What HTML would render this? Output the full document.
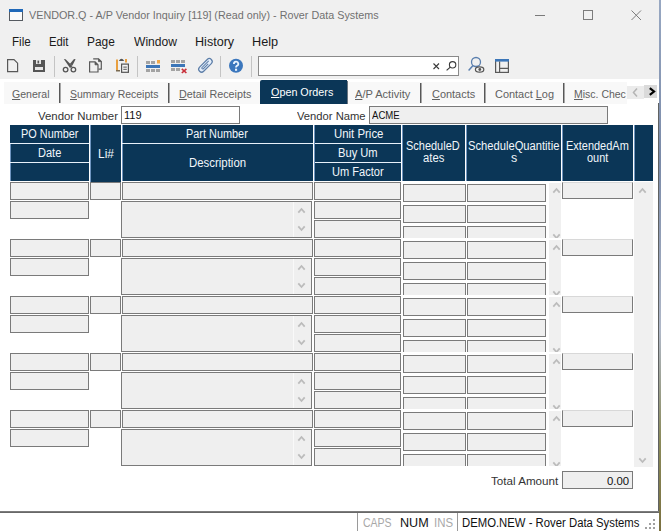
<!DOCTYPE html>
<html><head><meta charset="utf-8"><style>
html,body{margin:0;padding:0;}
body{width:661px;height:531px;position:relative;overflow:hidden;background:#fff;font-family:"Liberation Sans", sans-serif;}
.b{position:absolute;}
.t{position:absolute;white-space:pre;line-height:1;font-family:"Liberation Sans", sans-serif;transform-origin:0 0;}
.t u{text-decoration:underline;text-underline-offset:0.5px;text-decoration-thickness:1px;}
</style></head><body>
<div class="b" style="left:0px;top:0px;width:659px;height:79px;background:#f0f0f0;"></div><div class="b" style="left:4px;top:82px;width:623px;height:22px;background:#f8f8f8;"></div><div class="b" style="left:260px;top:80px;width:87px;height:24px;background:#0b3657;border-top-left-radius:2px;"></div><div class="b" style="left:347px;top:81px;width:1px;height:23px;background:#6a7580;"></div><div class="b" style="left:59px;top:83px;width:1px;height:20px;background:#585858;"></div><div class="b" style="left:60px;top:83px;width:1px;height:20px;background:#a8a8a8;"></div><div class="b" style="left:168px;top:83px;width:1px;height:20px;background:#585858;"></div><div class="b" style="left:169px;top:83px;width:1px;height:20px;background:#a8a8a8;"></div><div class="b" style="left:420px;top:83px;width:1px;height:20px;background:#585858;"></div><div class="b" style="left:421px;top:83px;width:1px;height:20px;background:#a8a8a8;"></div><div class="b" style="left:484px;top:83px;width:1px;height:20px;background:#585858;"></div><div class="b" style="left:485px;top:83px;width:1px;height:20px;background:#a8a8a8;"></div><div class="b" style="left:563px;top:83px;width:1px;height:20px;background:#585858;"></div><div class="b" style="left:564px;top:83px;width:1px;height:20px;background:#a8a8a8;"></div><div class="b" style="left:658px;top:103px;width:1px;height:409px;background:#606262;"></div><div class="b" style="left:659px;top:0px;width:2px;height:532px;background:linear-gradient(#98a8c2 0%,#7a8aa8 30%,#b0b8c8 62%,#8a8a5a 83%,#7a7040 100%);"></div><div class="b" style="left:0px;top:511px;width:659px;height:1px;background:#7c7c7c;"></div><div class="b" style="left:0px;top:512px;width:659px;height:1px;background:#686868;"></div><div class="b" style="left:0px;top:513px;width:659px;height:19px;background:#ffffff;"></div><div class="b" style="left:357px;top:513px;width:1px;height:19px;background:#9a9a9a;"></div><div class="b" style="left:457px;top:513px;width:1px;height:19px;background:#9a9a9a;"></div><div class="b" style="left:258px;top:56px;width:201px;height:20px;background:#fff;border:1px solid #8a8a8a;box-sizing:border-box;"></div><div class="b" style="left:54px;top:56px;width:1px;height:21px;background:#c4c4c4;"></div><div class="b" style="left:137px;top:56px;width:1px;height:21px;background:#c4c4c4;"></div><div class="b" style="left:220px;top:56px;width:1px;height:21px;background:#c4c4c4;"></div><div class="b" style="left:251px;top:56px;width:1px;height:21px;background:#c4c4c4;"></div><div class="b" style="left:121px;top:106px;width:119px;height:18px;background:#fff;border:1px solid #7a7a7a;box-sizing:border-box;"></div><div class="b" style="left:369px;top:106px;width:239px;height:18px;background:#efefef;border:1px solid #7a7a7a;box-sizing:border-box;"></div><div class="b" style="left:10px;top:125px;width:79px;height:56px;background:#0b3657;"></div><div class="b" style="left:10px;top:144px;width:1px;height:37px;background:#6f95c0;"></div><div class="b" style="left:10px;top:143px;width:79px;height:1px;background:#e8f1fa;"></div><div class="b" style="left:10px;top:162px;width:79px;height:1px;background:#e8f1fa;"></div><div class="b" style="left:90px;top:125px;width:31px;height:57px;background:#0b3657;"></div><div class="b" style="left:90px;top:125px;width:1px;height:57px;background:#6f95c0;"></div><div class="b" style="left:122px;top:125px;width:191px;height:56px;background:#0b3657;"></div><div class="b" style="left:122px;top:125px;width:1px;height:56px;background:#6f95c0;"></div><div class="b" style="left:122px;top:143px;width:191px;height:1px;background:#e8f1fa;"></div><div class="b" style="left:314px;top:125px;width:87px;height:56px;background:#0b3657;"></div><div class="b" style="left:314px;top:125px;width:1px;height:56px;background:#6f95c0;"></div><div class="b" style="left:315px;top:143px;width:86px;height:1px;background:#e8f1fa;"></div><div class="b" style="left:315px;top:162px;width:86px;height:1px;background:#e8f1fa;"></div><div class="b" style="left:402px;top:125px;width:63px;height:56px;background:#0b3657;"></div><div class="b" style="left:402px;top:125px;width:1px;height:56px;background:#6f95c0;"></div><div class="b" style="left:466px;top:125px;width:95px;height:56px;background:#0b3657;"></div><div class="b" style="left:466px;top:125px;width:1px;height:56px;background:#6f95c0;"></div><div class="b" style="left:562px;top:125px;width:71px;height:56px;background:#0b3657;"></div><div class="b" style="left:562px;top:125px;width:1px;height:56px;background:#6f95c0;"></div><div class="b" style="left:634px;top:125px;width:19px;height:56px;background:#0b3657;"></div><div class="b" style="left:634px;top:125px;width:1px;height:56px;background:#6f95c0;"></div><div class="b" style="left:634px;top:182px;width:19px;height:285px;background:#f0f0f0;"></div><div class="b" style="left:10px;top:182px;width:79px;height:18px;background:#efefef;border:1px solid #7a7a7a;box-sizing:border-box;"></div><div class="b" style="left:10px;top:201px;width:79px;height:18px;background:#efefef;border:1px solid #7a7a7a;box-sizing:border-box;"></div><div class="b" style="left:90px;top:182px;width:31px;height:18px;background:#efefef;border:1px solid #7a7a7a;box-sizing:border-box;"></div><div class="b" style="left:122px;top:182px;width:191px;height:18px;background:#efefef;border:1px solid #7a7a7a;box-sizing:border-box;"></div><div class="b" style="left:121px;top:201px;width:191px;height:37px;background:#efefef;border:1px solid #7a7a7a;box-sizing:border-box;"></div><div class="b" style="left:293px;top:202px;width:1px;height:35px;background:#f9f9f9;"></div><div class="b" style="left:314px;top:182px;width:87px;height:18px;background:#efefef;border:1px solid #7a7a7a;box-sizing:border-box;"></div><div class="b" style="left:314px;top:201px;width:87px;height:18px;background:#efefef;border:1px solid #7a7a7a;box-sizing:border-box;"></div><div class="b" style="left:314px;top:220px;width:87px;height:18px;background:#efefef;border:1px solid #7a7a7a;box-sizing:border-box;"></div><div class="b" style="left:402px;top:182px;width:160px;height:56px;overflow:hidden;"><div class="b" style="left:1px;top:2px;width:63px;height:18px;background:#efefef;border:1px solid #7a7a7a;box-sizing:border-box;"></div><div class="b" style="left:65px;top:2px;width:79px;height:18px;background:#efefef;border:1px solid #7a7a7a;box-sizing:border-box;"></div><div class="b" style="left:1px;top:23px;width:63px;height:18px;background:#efefef;border:1px solid #7a7a7a;box-sizing:border-box;"></div><div class="b" style="left:65px;top:23px;width:79px;height:18px;background:#efefef;border:1px solid #7a7a7a;box-sizing:border-box;"></div><div class="b" style="left:1px;top:44px;width:63px;height:18px;background:#efefef;border:1px solid #7a7a7a;box-sizing:border-box;"></div><div class="b" style="left:65px;top:44px;width:79px;height:18px;background:#efefef;border:1px solid #7a7a7a;box-sizing:border-box;"></div><div class="b" style="left:147px;top:1px;width:12px;height:55px;background:#f0f0f0;"></div><svg class="b" style="left:150px;top:5px" width="9" height="7"><path d="M1.3 5.6 L4.5 2 L7.7 5.6" fill="none" stroke="#bcbcbc" stroke-width="1.8"/></svg><svg class="b" style="left:150px;top:51px" width="9" height="7"><path d="M1.3 1.4 L4.5 5 L7.7 1.4" fill="none" stroke="#bcbcbc" stroke-width="1.8"/></svg></div><div class="b" style="left:562px;top:182px;width:71px;height:17px;background:#efefef;border:1px solid #7a7a7a;border-top-color:#d8d8d8;box-sizing:border-box;"></div><div class="b" style="left:10px;top:239px;width:79px;height:18px;background:#efefef;border:1px solid #7a7a7a;box-sizing:border-box;"></div><div class="b" style="left:10px;top:258px;width:79px;height:18px;background:#efefef;border:1px solid #7a7a7a;box-sizing:border-box;"></div><div class="b" style="left:90px;top:239px;width:31px;height:18px;background:#efefef;border:1px solid #7a7a7a;box-sizing:border-box;"></div><div class="b" style="left:122px;top:239px;width:191px;height:18px;background:#efefef;border:1px solid #7a7a7a;box-sizing:border-box;"></div><div class="b" style="left:121px;top:258px;width:191px;height:37px;background:#efefef;border:1px solid #7a7a7a;box-sizing:border-box;"></div><div class="b" style="left:293px;top:259px;width:1px;height:35px;background:#f9f9f9;"></div><div class="b" style="left:314px;top:239px;width:87px;height:18px;background:#efefef;border:1px solid #7a7a7a;box-sizing:border-box;"></div><div class="b" style="left:314px;top:258px;width:87px;height:18px;background:#efefef;border:1px solid #7a7a7a;box-sizing:border-box;"></div><div class="b" style="left:314px;top:277px;width:87px;height:18px;background:#efefef;border:1px solid #7a7a7a;box-sizing:border-box;"></div><div class="b" style="left:402px;top:239px;width:160px;height:56px;overflow:hidden;"><div class="b" style="left:1px;top:2px;width:63px;height:18px;background:#efefef;border:1px solid #7a7a7a;box-sizing:border-box;"></div><div class="b" style="left:65px;top:2px;width:79px;height:18px;background:#efefef;border:1px solid #7a7a7a;box-sizing:border-box;"></div><div class="b" style="left:1px;top:23px;width:63px;height:18px;background:#efefef;border:1px solid #7a7a7a;box-sizing:border-box;"></div><div class="b" style="left:65px;top:23px;width:79px;height:18px;background:#efefef;border:1px solid #7a7a7a;box-sizing:border-box;"></div><div class="b" style="left:1px;top:44px;width:63px;height:18px;background:#efefef;border:1px solid #7a7a7a;box-sizing:border-box;"></div><div class="b" style="left:65px;top:44px;width:79px;height:18px;background:#efefef;border:1px solid #7a7a7a;box-sizing:border-box;"></div><div class="b" style="left:147px;top:1px;width:12px;height:55px;background:#f0f0f0;"></div><svg class="b" style="left:150px;top:5px" width="9" height="7"><path d="M1.3 5.6 L4.5 2 L7.7 5.6" fill="none" stroke="#bcbcbc" stroke-width="1.8"/></svg><svg class="b" style="left:150px;top:51px" width="9" height="7"><path d="M1.3 1.4 L4.5 5 L7.7 1.4" fill="none" stroke="#bcbcbc" stroke-width="1.8"/></svg></div><div class="b" style="left:562px;top:239px;width:71px;height:17px;background:#efefef;border:1px solid #7a7a7a;border-top-color:#d8d8d8;box-sizing:border-box;"></div><div class="b" style="left:10px;top:296px;width:79px;height:18px;background:#efefef;border:1px solid #7a7a7a;box-sizing:border-box;"></div><div class="b" style="left:10px;top:315px;width:79px;height:18px;background:#efefef;border:1px solid #7a7a7a;box-sizing:border-box;"></div><div class="b" style="left:90px;top:296px;width:31px;height:18px;background:#efefef;border:1px solid #7a7a7a;box-sizing:border-box;"></div><div class="b" style="left:122px;top:296px;width:191px;height:18px;background:#efefef;border:1px solid #7a7a7a;box-sizing:border-box;"></div><div class="b" style="left:121px;top:315px;width:191px;height:37px;background:#efefef;border:1px solid #7a7a7a;box-sizing:border-box;"></div><div class="b" style="left:293px;top:316px;width:1px;height:35px;background:#f9f9f9;"></div><div class="b" style="left:314px;top:296px;width:87px;height:18px;background:#efefef;border:1px solid #7a7a7a;box-sizing:border-box;"></div><div class="b" style="left:314px;top:315px;width:87px;height:18px;background:#efefef;border:1px solid #7a7a7a;box-sizing:border-box;"></div><div class="b" style="left:314px;top:334px;width:87px;height:18px;background:#efefef;border:1px solid #7a7a7a;box-sizing:border-box;"></div><div class="b" style="left:402px;top:296px;width:160px;height:56px;overflow:hidden;"><div class="b" style="left:1px;top:2px;width:63px;height:18px;background:#efefef;border:1px solid #7a7a7a;box-sizing:border-box;"></div><div class="b" style="left:65px;top:2px;width:79px;height:18px;background:#efefef;border:1px solid #7a7a7a;box-sizing:border-box;"></div><div class="b" style="left:1px;top:23px;width:63px;height:18px;background:#efefef;border:1px solid #7a7a7a;box-sizing:border-box;"></div><div class="b" style="left:65px;top:23px;width:79px;height:18px;background:#efefef;border:1px solid #7a7a7a;box-sizing:border-box;"></div><div class="b" style="left:1px;top:44px;width:63px;height:18px;background:#efefef;border:1px solid #7a7a7a;box-sizing:border-box;"></div><div class="b" style="left:65px;top:44px;width:79px;height:18px;background:#efefef;border:1px solid #7a7a7a;box-sizing:border-box;"></div><div class="b" style="left:147px;top:1px;width:12px;height:55px;background:#f0f0f0;"></div><svg class="b" style="left:150px;top:5px" width="9" height="7"><path d="M1.3 5.6 L4.5 2 L7.7 5.6" fill="none" stroke="#bcbcbc" stroke-width="1.8"/></svg><svg class="b" style="left:150px;top:51px" width="9" height="7"><path d="M1.3 1.4 L4.5 5 L7.7 1.4" fill="none" stroke="#bcbcbc" stroke-width="1.8"/></svg></div><div class="b" style="left:562px;top:296px;width:71px;height:17px;background:#efefef;border:1px solid #7a7a7a;border-top-color:#d8d8d8;box-sizing:border-box;"></div><div class="b" style="left:10px;top:353px;width:79px;height:18px;background:#efefef;border:1px solid #7a7a7a;box-sizing:border-box;"></div><div class="b" style="left:10px;top:372px;width:79px;height:18px;background:#efefef;border:1px solid #7a7a7a;box-sizing:border-box;"></div><div class="b" style="left:90px;top:353px;width:31px;height:18px;background:#efefef;border:1px solid #7a7a7a;box-sizing:border-box;"></div><div class="b" style="left:122px;top:353px;width:191px;height:18px;background:#efefef;border:1px solid #7a7a7a;box-sizing:border-box;"></div><div class="b" style="left:121px;top:372px;width:191px;height:37px;background:#efefef;border:1px solid #7a7a7a;box-sizing:border-box;"></div><div class="b" style="left:293px;top:373px;width:1px;height:35px;background:#f9f9f9;"></div><div class="b" style="left:314px;top:353px;width:87px;height:18px;background:#efefef;border:1px solid #7a7a7a;box-sizing:border-box;"></div><div class="b" style="left:314px;top:372px;width:87px;height:18px;background:#efefef;border:1px solid #7a7a7a;box-sizing:border-box;"></div><div class="b" style="left:314px;top:391px;width:87px;height:18px;background:#efefef;border:1px solid #7a7a7a;box-sizing:border-box;"></div><div class="b" style="left:402px;top:353px;width:160px;height:56px;overflow:hidden;"><div class="b" style="left:1px;top:2px;width:63px;height:18px;background:#efefef;border:1px solid #7a7a7a;box-sizing:border-box;"></div><div class="b" style="left:65px;top:2px;width:79px;height:18px;background:#efefef;border:1px solid #7a7a7a;box-sizing:border-box;"></div><div class="b" style="left:1px;top:23px;width:63px;height:18px;background:#efefef;border:1px solid #7a7a7a;box-sizing:border-box;"></div><div class="b" style="left:65px;top:23px;width:79px;height:18px;background:#efefef;border:1px solid #7a7a7a;box-sizing:border-box;"></div><div class="b" style="left:1px;top:44px;width:63px;height:18px;background:#efefef;border:1px solid #7a7a7a;box-sizing:border-box;"></div><div class="b" style="left:65px;top:44px;width:79px;height:18px;background:#efefef;border:1px solid #7a7a7a;box-sizing:border-box;"></div><div class="b" style="left:147px;top:1px;width:12px;height:55px;background:#f0f0f0;"></div><svg class="b" style="left:150px;top:5px" width="9" height="7"><path d="M1.3 5.6 L4.5 2 L7.7 5.6" fill="none" stroke="#bcbcbc" stroke-width="1.8"/></svg><svg class="b" style="left:150px;top:51px" width="9" height="7"><path d="M1.3 1.4 L4.5 5 L7.7 1.4" fill="none" stroke="#bcbcbc" stroke-width="1.8"/></svg></div><div class="b" style="left:562px;top:353px;width:71px;height:17px;background:#efefef;border:1px solid #7a7a7a;border-top-color:#d8d8d8;box-sizing:border-box;"></div><div class="b" style="left:10px;top:410px;width:79px;height:18px;background:#efefef;border:1px solid #7a7a7a;box-sizing:border-box;"></div><div class="b" style="left:10px;top:429px;width:79px;height:18px;background:#efefef;border:1px solid #7a7a7a;box-sizing:border-box;"></div><div class="b" style="left:90px;top:410px;width:31px;height:18px;background:#efefef;border:1px solid #7a7a7a;box-sizing:border-box;"></div><div class="b" style="left:122px;top:410px;width:191px;height:18px;background:#efefef;border:1px solid #7a7a7a;box-sizing:border-box;"></div><div class="b" style="left:121px;top:429px;width:191px;height:37px;background:#efefef;border:1px solid #7a7a7a;box-sizing:border-box;"></div><div class="b" style="left:293px;top:430px;width:1px;height:35px;background:#f9f9f9;"></div><div class="b" style="left:314px;top:410px;width:87px;height:18px;background:#efefef;border:1px solid #7a7a7a;box-sizing:border-box;"></div><div class="b" style="left:314px;top:429px;width:87px;height:18px;background:#efefef;border:1px solid #7a7a7a;box-sizing:border-box;"></div><div class="b" style="left:314px;top:448px;width:87px;height:18px;background:#efefef;border:1px solid #7a7a7a;box-sizing:border-box;"></div><div class="b" style="left:402px;top:410px;width:160px;height:56px;overflow:hidden;"><div class="b" style="left:1px;top:2px;width:63px;height:18px;background:#efefef;border:1px solid #7a7a7a;box-sizing:border-box;"></div><div class="b" style="left:65px;top:2px;width:79px;height:18px;background:#efefef;border:1px solid #7a7a7a;box-sizing:border-box;"></div><div class="b" style="left:1px;top:23px;width:63px;height:18px;background:#efefef;border:1px solid #7a7a7a;box-sizing:border-box;"></div><div class="b" style="left:65px;top:23px;width:79px;height:18px;background:#efefef;border:1px solid #7a7a7a;box-sizing:border-box;"></div><div class="b" style="left:1px;top:44px;width:63px;height:18px;background:#efefef;border:1px solid #7a7a7a;box-sizing:border-box;"></div><div class="b" style="left:65px;top:44px;width:79px;height:18px;background:#efefef;border:1px solid #7a7a7a;box-sizing:border-box;"></div><div class="b" style="left:147px;top:1px;width:12px;height:55px;background:#f0f0f0;"></div><svg class="b" style="left:150px;top:5px" width="9" height="7"><path d="M1.3 5.6 L4.5 2 L7.7 5.6" fill="none" stroke="#bcbcbc" stroke-width="1.8"/></svg><svg class="b" style="left:150px;top:51px" width="9" height="7"><path d="M1.3 1.4 L4.5 5 L7.7 1.4" fill="none" stroke="#bcbcbc" stroke-width="1.8"/></svg></div><div class="b" style="left:562px;top:410px;width:71px;height:17px;background:#efefef;border:1px solid #7a7a7a;border-top-color:#d8d8d8;box-sizing:border-box;"></div><div class="b" style="left:562px;top:471px;width:71px;height:18px;background:#efefef;border:1px solid #7a7a7a;box-sizing:border-box;"></div>
<svg class="b" style="left:637.9px;top:187.3px" width="9" height="7"><path d="M1.3 5.6 L4.5 2 L7.7 5.6" fill="none" stroke="#bcbcbc" stroke-width="1.8"/></svg><svg class="b" style="left:637.9px;top:457px" width="9" height="7"><path d="M1.3 1.4 L4.5 5 L7.7 1.4" fill="none" stroke="#bcbcbc" stroke-width="1.8"/></svg><svg class="b" style="left:296.8px;top:207px" width="9" height="7"><path d="M1.3 5.6 L4.5 2 L7.7 5.6" fill="none" stroke="#bcbcbc" stroke-width="1.8"/></svg><svg class="b" style="left:296.8px;top:224.5px" width="9" height="7"><path d="M1.3 1.4 L4.5 5 L7.7 1.4" fill="none" stroke="#bcbcbc" stroke-width="1.8"/></svg><svg class="b" style="left:296.8px;top:264px" width="9" height="7"><path d="M1.3 5.6 L4.5 2 L7.7 5.6" fill="none" stroke="#bcbcbc" stroke-width="1.8"/></svg><svg class="b" style="left:296.8px;top:281.5px" width="9" height="7"><path d="M1.3 1.4 L4.5 5 L7.7 1.4" fill="none" stroke="#bcbcbc" stroke-width="1.8"/></svg><svg class="b" style="left:296.8px;top:321px" width="9" height="7"><path d="M1.3 5.6 L4.5 2 L7.7 5.6" fill="none" stroke="#bcbcbc" stroke-width="1.8"/></svg><svg class="b" style="left:296.8px;top:338.5px" width="9" height="7"><path d="M1.3 1.4 L4.5 5 L7.7 1.4" fill="none" stroke="#bcbcbc" stroke-width="1.8"/></svg><svg class="b" style="left:296.8px;top:378px" width="9" height="7"><path d="M1.3 5.6 L4.5 2 L7.7 5.6" fill="none" stroke="#bcbcbc" stroke-width="1.8"/></svg><svg class="b" style="left:296.8px;top:395.5px" width="9" height="7"><path d="M1.3 1.4 L4.5 5 L7.7 1.4" fill="none" stroke="#bcbcbc" stroke-width="1.8"/></svg><svg class="b" style="left:296.8px;top:435px" width="9" height="7"><path d="M1.3 5.6 L4.5 2 L7.7 5.6" fill="none" stroke="#bcbcbc" stroke-width="1.8"/></svg><svg class="b" style="left:296.8px;top:452.5px" width="9" height="7"><path d="M1.3 1.4 L4.5 5 L7.7 1.4" fill="none" stroke="#bcbcbc" stroke-width="1.8"/></svg>
<span class="t" style="left:28.8px;top:10.00px;font-size:11.5px;color:#707070;transform:scaleX(0.9375);">VENDOR.Q - A/P Vendor Inquiry [119] (Read only) - Rover Data Systems</span><span class="t" style="left:11.8px;top:36.00px;font-size:12px;color:#1a1a1a;transform:scaleX(0.9690);">File</span><span class="t" style="left:49.1px;top:36.00px;font-size:12px;color:#1a1a1a;transform:scaleX(0.9418);">Edit</span><span class="t" style="left:87.0px;top:36.00px;font-size:12px;color:#1a1a1a;transform:scaleX(0.9925);">Page</span><span class="t" style="left:133.9px;top:36.00px;font-size:12px;color:#1a1a1a;transform:scaleX(1.0082);">Window</span><span class="t" style="left:195.0px;top:36.00px;font-size:12px;color:#1a1a1a;transform:scaleX(1.0483);">History</span><span class="t" style="left:251.9px;top:36.00px;font-size:12px;color:#1a1a1a;transform:scaleX(1.0581);">Help</span><span class="t" style="left:12.4px;top:89.00px;font-size:11.5px;color:#606060;transform:scaleX(0.9182);"><u>G</u>eneral</span><span class="t" style="left:70.1px;top:89.00px;font-size:11.5px;color:#606060;transform:scaleX(0.9101);"><u>S</u>ummary Receipts</span><span class="t" style="left:178.5px;top:89.00px;font-size:11.5px;color:#606060;transform:scaleX(0.9342);"><u>D</u>etail Receipts</span><span class="t" style="left:355.0px;top:89.00px;font-size:11.5px;color:#606060;transform:scaleX(0.9642);"><u>A</u>/P Activity</span><span class="t" style="left:431.5px;top:89.00px;font-size:11.5px;color:#606060;transform:scaleX(0.9506);"><u>C</u>ontacts</span><span class="t" style="left:495.1px;top:89.00px;font-size:11.5px;color:#606060;transform:scaleX(0.9514);">Contact <u>L</u>og</span><span class="t" style="left:573.6px;top:89.00px;font-size:11.5px;color:#606060;transform:scaleX(0.9117);"><u>M</u>isc. Chec</span><span class="t" style="left:271.3px;top:87.00px;font-size:11.5px;color:#ffffff;transform:scaleX(0.9374);"><u>O</u>pen Orders</span><span class="t" style="left:38.1px;top:111.00px;font-size:11.5px;color:#333;transform:scaleX(0.9925);">Vendor Number</span><span class="t" style="left:124.3px;top:110.00px;font-size:11.5px;color:#111;transform:scaleX(0.9612);">119</span><span class="t" style="left:297.2px;top:111.00px;font-size:11.5px;color:#333;transform:scaleX(0.9755);">Vendor Name</span><span class="t" style="left:372.0px;top:110.00px;font-size:11.5px;color:#111;transform:scaleX(0.8336);">ACME</span><span class="t" style="left:21.2px;top:128.00px;font-size:12px;color:#f2f6fb;transform:scaleX(0.9076);">PO Number</span><span class="t" style="left:38.1px;top:147.00px;font-size:12px;color:#f2f6fb;transform:scaleX(0.9179);">Date</span><span class="t" style="left:97.6px;top:148.00px;font-size:12px;color:#f2f6fb;transform:scaleX(0.9933);">Li#</span><span class="t" style="left:186.0px;top:128.00px;font-size:12px;color:#f2f6fb;transform:scaleX(0.9079);">Part Number</span><span class="t" style="left:188.9px;top:157.00px;font-size:12px;color:#f2f6fb;transform:scaleX(0.9511);">Description</span><span class="t" style="left:334.0px;top:128.00px;font-size:12px;color:#f2f6fb;transform:scaleX(0.9505);">Unit Price</span><span class="t" style="left:337.8px;top:147.00px;font-size:12px;color:#f2f6fb;transform:scaleX(0.9293);">Buy Um</span><span class="t" style="left:332.1px;top:166.00px;font-size:12px;color:#f2f6fb;transform:scaleX(0.9224);">Um Factor</span><span class="t" style="left:406.2px;top:140.00px;font-size:12px;color:#f2f6fb;transform:scaleX(0.9143);">ScheduleD</span><span class="t" style="left:422.7px;top:152.00px;font-size:12px;color:#f2f6fb;transform:scaleX(0.9379);">ates</span><span class="t" style="left:468.1px;top:140.00px;font-size:12px;color:#f2f6fb;transform:scaleX(0.9320);">ScheduleQuantitie</span><span class="t" style="left:510.5px;top:152.00px;font-size:12px;color:#f2f6fb;transform:scaleX(1.0400);">s</span><span class="t" style="left:565.6px;top:140.00px;font-size:12px;color:#f2f6fb;transform:scaleX(0.9134);">ExtendedAm</span><span class="t" style="left:586.7px;top:152.00px;font-size:12px;color:#f2f6fb;transform:scaleX(0.9099);">ount</span><span class="t" style="left:490.7px;top:476.00px;font-size:11.5px;color:#333;transform:scaleX(1.0113);">Total Amount</span><span class="t" style="left:607.3px;top:476.00px;font-size:11.5px;color:#111;transform:scaleX(0.9860);">0.00</span><span class="t" style="left:362.6px;top:517.00px;font-size:12px;color:#a8a8a8;transform:scaleX(0.8756);">CAPS</span><span class="t" style="left:399.5px;top:517.00px;font-size:12px;color:#111;transform:scaleX(1.0495);">NUM</span><span class="t" style="left:434.0px;top:517.00px;font-size:12px;color:#a8a8a8;transform:scaleX(0.9514);">INS</span><span class="t" style="left:461.9px;top:517.00px;font-size:12px;color:#111;transform:scaleX(0.9437);">DEMO.NEW - Rover Data Systems</span>
<div class="b" style="left:627px;top:86px;width:17px;height:13px;background:#ebebeb;"></div>
<div class="b" style="left:644px;top:85px;width:13px;height:13px;background:#dadada;"></div>
<svg class="b" style="left:0;top:0" width="661" height="531" viewBox="0 0 661 531">
 <!-- tab scroll arrows -->
 <path d="M637 88.5 L633.5 92.5 L637 96.5" fill="none" stroke="#b4b4b4" stroke-width="1.5"/>
 <path d="M649.8 88.2 L654 91.5 L649.8 94.8" fill="none" stroke="#000" stroke-width="2.2"/>
 <!-- window icon -->
 <rect x="9.5" y="9.5" width="13" height="11" fill="#fafafa" stroke="#555a60" stroke-width="1"/>
 <rect x="9" y="9" width="14" height="3" fill="#1f68b8"/>
 <!-- window controls -->
 <rect x="535" y="15" width="10" height="1" fill="#7a7a7a"/>
 <rect x="583.5" y="10.5" width="9" height="9" fill="none" stroke="#7c7c7c" stroke-width="1"/>
 <path d="M631.5 10.5 L641 20 M641 10.5 L631.5 20" stroke="#7c7c7c" stroke-width="1"/>
 <!-- new doc -->
 <path d="M7.6 59.6 H14 L17.6 63.2 V71.6 H7.6 Z" fill="none" stroke="#585858" stroke-width="1.2"/>
 <!-- save -->
 <rect x="33" y="60" width="12" height="12" fill="#555"/>
 <rect x="36" y="60" width="5" height="4" fill="#e6e6e6"/>
 <rect x="37.5" y="60.6" width="1.6" height="2.8" fill="#555"/>
 <rect x="35" y="67" width="8" height="3" fill="#e6e6e6"/>
 <!-- scissors -->
 <path d="M63.8 59 L65.6 59.2 L72.6 66.2 L70 68 Z" fill="#555"/>
 <path d="M74 59 L75.6 59.3 L72.4 65.4 L69.8 64 Z" fill="#555"/>
 <circle cx="65.6" cy="69.6" r="2.3" fill="none" stroke="#555" stroke-width="1.3"/>
 <circle cx="73.4" cy="69.6" r="2.3" fill="none" stroke="#555" stroke-width="1.3"/>
 <!-- copy -->
 <path d="M93.2 58.8 H98.5 L101.3 61.6 V69.2 H98.5" fill="#f0f0f0" stroke="#595959" stroke-width="1.2"/>
 <path d="M89.6 61.8 H95 L98 64.8 V72 H89.6 Z" fill="#f0f0f0" stroke="#595959" stroke-width="1.2"/>
 <path d="M95 61.8 V64.8 H98" fill="#595959" stroke="#595959" stroke-width="0.8"/>
 <path d="M98.5 58.8 V61.6 H101.3" fill="#595959" stroke="#595959" stroke-width="0.8"/>
 <!-- paste -->
 <rect x="116" y="59.5" width="2" height="11" fill="#e9a040"/>
 <rect x="116" y="70" width="4" height="1.5" fill="#7a6a50"/>
 <rect x="125" y="59" width="2" height="3.5" fill="#e9a040"/>
 <path d="M118.8 61 Q121.5 56.6 124.2 61 Z" fill="#555"/>
 <rect x="121.6" y="64.1" width="6.8" height="8.2" fill="#f4f4f4" stroke="#555" stroke-width="1.2"/>
 <rect x="123.3" y="66.6" width="3.5" height="1" fill="#555"/>
 <rect x="123.3" y="68.8" width="3.5" height="1" fill="#555"/>
 <!-- insert row -->
 <g fill="#a3a3a3">
  <rect x="146" y="61" width="4" height="3"/><rect x="151" y="61" width="4" height="3"/>
  <rect x="146" y="69" width="4" height="3"/><rect x="151" y="69" width="4" height="3"/><rect x="156" y="69" width="4" height="3"/>
 </g>
 <rect x="157" y="60" width="3" height="3.5" fill="#f0a848"/>
 <rect x="146" y="65" width="14" height="3" fill="#3c76b8"/>
 <!-- delete row -->
 <g fill="#a3a3a3">
  <rect x="171" y="60" width="4" height="3"/><rect x="176" y="60" width="4" height="3"/><rect x="181" y="60" width="4" height="3"/>
  <rect x="171" y="68" width="4" height="3"/><rect x="176" y="68" width="4" height="3"/>
 </g>
 <rect x="171" y="64" width="14" height="3" fill="#3c76b8"/>
 <path d="M181.8 68.8 L186.4 73 M186.4 68.8 L181.8 73" stroke="#c8303a" stroke-width="1.6"/>
 <!-- paperclip -->
 <g transform="rotate(-45 205.3 65.5)">
  <rect x="197.2" y="62.6" width="16.6" height="5.8" rx="2.9" fill="#e4eefa" stroke="#5d7ea8" stroke-width="1.2"/>
  <path d="M211 64.6 H201.3 A1 1 0 0 0 201.3 66.4 H208.5" fill="none" stroke="#5d7ea8" stroke-width="1"/>
 </g>
 <!-- help -->
 <circle cx="236" cy="65.8" r="7" fill="#3b77bd"/>
 <path d="M233.9 63.9 A2.2 2.2 0 1 1 236.6 66 Q236 66.4 236 67.6" fill="none" stroke="#eaf4ff" stroke-width="1.8"/>
 <rect x="235" y="68.7" width="2.1" height="2.1" fill="#eaf4ff"/>
 <!-- search x & magnifier -->
 <path d="M433.5 63.5 L439 69 M439 63.5 L433.5 69" stroke="#3a3a3a" stroke-width="1.1"/>
 <circle cx="452.6" cy="64.8" r="3.2" fill="none" stroke="#3a3a3a" stroke-width="1.1"/>
 <path d="M450.3 67.1 L446.6 70.4" stroke="#3a3a3a" stroke-width="1.2"/>
 <!-- search eye -->
 <circle cx="476" cy="62" r="4.5" fill="none" stroke="#5a7fae" stroke-width="1.3"/>
 <path d="M473 65.6 L468.6 70.4" stroke="#5a7fae" stroke-width="1.5"/>
 <ellipse cx="479.6" cy="69.5" rx="4.2" ry="2.6" fill="#f0f0f0" stroke="#555" stroke-width="1.2"/>
 <circle cx="479.8" cy="69.5" r="1.4" fill="#555"/>
 <!-- layout -->
 <rect x="495.6" y="59.6" width="12.8" height="12.8" fill="none" stroke="#595959" stroke-width="1.2"/>
 <rect x="495" y="59" width="14" height="2.6" fill="#3c76b8"/>
 <path d="M499.6 61.5 V72.4 M499.6 68.4 H508.4" stroke="#595959" stroke-width="1.2"/>
 <!-- status grip -->
 <g fill="#a0a0a0">
  <rect x="653" y="519" width="2" height="2"/>
  <rect x="649" y="523" width="2" height="2"/><rect x="653" y="523" width="2" height="2"/>
  <rect x="645" y="527" width="2" height="2"/><rect x="649" y="527" width="2" height="2"/><rect x="653" y="527" width="2" height="2"/>
 </g>
</svg>

</body></html>
